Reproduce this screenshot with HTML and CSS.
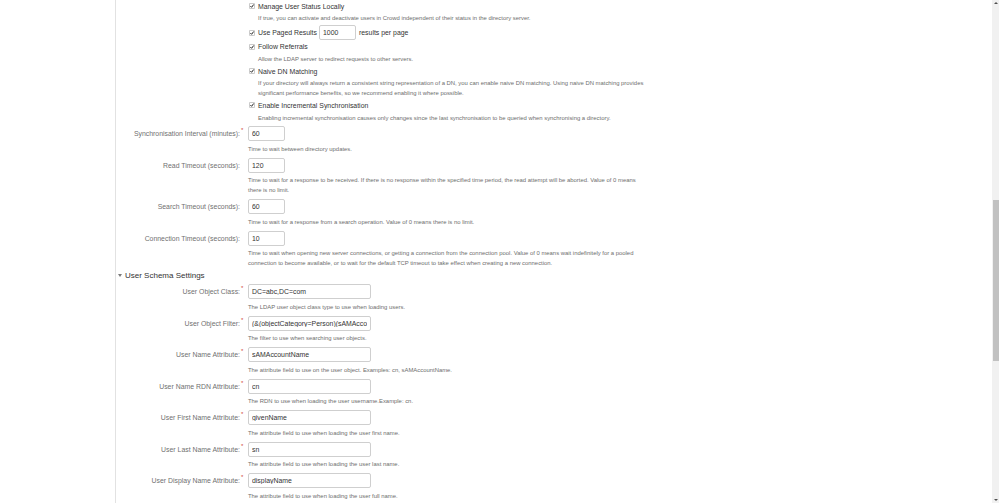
FILE: index.html
```html
<!DOCTYPE html>
<html lang="en">
<head>
<meta charset="utf-8">
<title>Directory settings</title>
<link rel="stylesheet" href="styles.css">
</head>
<body>
<div class="page">
  <div class="panel">
    <div class="checks">
      <div class="check">
        <div class="check-title"><svg class="cb" viewBox="0 0 6 6"><rect x="0.4" y="0.4" width="5.2" height="5.2" rx="0.8" fill="#fff" stroke="#9a9a9a" stroke-width="0.6"/><path d="M1.4 3.1 L2.6 4.3 L4.7 1.5" fill="none" stroke="#222" stroke-width="1"/></svg><span>Manage User Status Locally</span></div>
        <div class="desc">If true, you can activate and deactivate users in Crowd independent of their status in the directory server.</div>
      </div>
      <div class="check">
        <div class="check-title paged"><svg class="cb" viewBox="0 0 6 6"><rect x="0.4" y="0.4" width="5.2" height="5.2" rx="0.8" fill="#fff" stroke="#9a9a9a" stroke-width="0.6"/><path d="M1.4 3.1 L2.6 4.3 L4.7 1.5" fill="none" stroke="#222" stroke-width="1"/></svg><span>Use Paged Results</span><input class="field small" type="text" value="1000"><span>results per page</span></div>
      </div>
      <div class="check">
        <div class="check-title"><svg class="cb" viewBox="0 0 6 6"><rect x="0.4" y="0.4" width="5.2" height="5.2" rx="0.8" fill="#fff" stroke="#9a9a9a" stroke-width="0.6"/><path d="M1.4 3.1 L2.6 4.3 L4.7 1.5" fill="none" stroke="#222" stroke-width="1"/></svg><span>Follow Referrals</span></div>
        <div class="desc">Allow the LDAP server to redirect requests to other servers.</div>
      </div>
      <div class="check">
        <div class="check-title"><svg class="cb" viewBox="0 0 6 6"><rect x="0.4" y="0.4" width="5.2" height="5.2" rx="0.8" fill="#fff" stroke="#9a9a9a" stroke-width="0.6"/><path d="M1.4 3.1 L2.6 4.3 L4.7 1.5" fill="none" stroke="#222" stroke-width="1"/></svg><span>Naive DN Matching</span></div>
        <div class="desc">If your directory will always return a consistent string representation of a DN, you can enable naive DN matching. Using naive DN matching provides<br>significant performance benefits, so we recommend enabling it where possible.</div>
      </div>
      <div class="check">
        <div class="check-title"><svg class="cb" viewBox="0 0 6 6"><rect x="0.4" y="0.4" width="5.2" height="5.2" rx="0.8" fill="#fff" stroke="#9a9a9a" stroke-width="0.6"/><path d="M1.4 3.1 L2.6 4.3 L4.7 1.5" fill="none" stroke="#222" stroke-width="1"/></svg><span>Enable Incremental Synchronisation</span></div>
        <div class="desc">Enabling incremental synchronisation causes only changes since the last synchronisation to be queried when synchronising a directory.</div>
      </div>
    </div>

    <div class="rows">
      <div class="row">
        <label class="label">Synchronisation Interval (minutes):<span class="req">*</span></label>
        <div class="control"><input class="field small" type="text" value="60"><div class="desc">Time to wait between directory updates.</div></div>
      </div>
      <div class="row">
        <label class="label plain">Read Timeout (seconds):</label>
        <div class="control"><input class="field small" type="text" value="120"><div class="desc">Time to wait for a response to be received. If there is no response within the specified time period, the read attempt will be aborted. Value of 0 means<br>there is no limit.</div></div>
      </div>
      <div class="row">
        <label class="label plain">Search Timeout (seconds):</label>
        <div class="control"><input class="field small" type="text" value="60"><div class="desc">Time to wait for a response from a search operation. Value of 0 means there is no limit.</div></div>
      </div>
      <div class="row">
        <label class="label plain">Connection Timeout (seconds):</label>
        <div class="control"><input class="field small" type="text" value="10"><div class="desc">Time to wait when opening new server connections, or getting a connection from the connection pool. Value of 0 means wait indefinitely for a pooled<br>connection to become available, or to wait for the default TCP timeout to take effect when creating a new connection.</div></div>
      </div>
    </div>

    <div class="section-head"><svg class="tri" viewBox="0 0 4 3"><path d="M0 0H4L2 3Z" fill="#7a7a7a"/></svg><span>User Schema Settings</span></div>

    <div class="rows">
      <div class="row">
        <label class="label">User Object Class:<span class="req">*</span></label>
        <div class="control"><input class="field wide" type="text" value="DC=abc,DC=com"><div class="desc">The LDAP user object class type to use when loading users.</div></div>
      </div>
      <div class="row">
        <label class="label">User Object Filter:<span class="req">*</span></label>
        <div class="control"><input class="field wide" type="text" value="(&amp;(objectCategory=Person)(sAMAccountName=*))"><div class="desc">The filter to use when searching user objects.</div></div>
      </div>
      <div class="row">
        <label class="label">User Name Attribute:<span class="req">*</span></label>
        <div class="control"><input class="field wide" type="text" value="sAMAccountName"><div class="desc">The attribute field to use on the user object. Examples: cn, sAMAccountName.</div></div>
      </div>
      <div class="row">
        <label class="label">User Name RDN Attribute:<span class="req">*</span></label>
        <div class="control"><input class="field wide" type="text" value="cn"><div class="desc">The RDN to use when loading the user username.Example: cn.</div></div>
      </div>
      <div class="row">
        <label class="label">User First Name Attribute:<span class="req">*</span></label>
        <div class="control"><input class="field wide" type="text" value="givenName"><div class="desc">The attribute field to use when loading the user first name.</div></div>
      </div>
      <div class="row">
        <label class="label">User Last Name Attribute:<span class="req">*</span></label>
        <div class="control"><input class="field wide" type="text" value="sn"><div class="desc">The attribute field to use when loading the user last name.</div></div>
      </div>
      <div class="row">
        <label class="label">User Display Name Attribute:<span class="req">*</span></label>
        <div class="control"><input class="field wide" type="text" value="displayName"><div class="desc">The attribute field to use when loading the user full name.</div></div>
      </div>
    </div>
  </div>
</div>

<div class="scrollbar">
  <span class="sb-up"></span>
  <div class="sb-thumb"></div>
  <span class="sb-down"></span>
</div>
</body>
</html>
```

FILE: styles.css
```css
html, body {
  margin: 0;
  padding: 0;
  background: #fff;
  height: 503px;
  overflow: hidden;
}

body {
  font-family: "Liberation Sans", Arial, sans-serif;
  color: #333;
}

.page {
  padding-left: 115px;
  padding-right: 8px;
}

.panel {
  border-left: 1px solid #e2e2e2;
  min-height: 520px;
}

/* checkbox block */
.checks {
  padding-left: 133px;
}

.check-title {
  display: flex;
  align-items: center;
  gap: 3px;
  height: 12px;
  font-size: 6.9px;
  color: #333;
  white-space: nowrap;
}

.check-title.paged {
  height: 16px;
  gap: 2px;
  margin-top: 1.5px;
}

.check-title.paged .cb {
  margin-right: 1px;
}

.check-title.paged .field {
  margin: 0 1px 0 0;
}

.cb {
  width: 6px;
  height: 6px;
  flex: none;
}

.check .desc {
  padding-left: 9px;
  margin-top: 1.25px;
  margin-bottom: 1px;
}

.desc {
  font-size: 5.9px;
  line-height: 10px;
  color: #6e6e6e;
  white-space: nowrap;
}

/* label + control rows */
.rows {
  padding-top: 2.5px;
}

.row {
  display: grid;
  grid-template-columns: 129px 1fr;
  column-gap: 3px;
}

.label {
  text-align: right;
  font-size: 6.9px;
  line-height: 15px;
  height: 15px;
  color: #707070;
  white-space: nowrap;
}

.label.plain {
  padding-right: 5px;
}

.req {
  display: inline-block;
  width: 5px;
  text-align: left;
  color: #d04437;
  font-size: 6px;
  line-height: 6px;
  vertical-align: 4px;
  padding-left: 1px;
  box-sizing: border-box;
}

.control .desc {
  margin-top: 2.5px;
  margin-bottom: 4px;
}

.field {
  display: block;
  box-sizing: border-box;
  height: 15px;
  margin: 0;
  padding: 0 3px;
  border: 1px solid #cfcfcf;
  border-radius: 2px;
  background: #fff;
  font-family: "Liberation Sans", Arial, sans-serif;
  font-size: 6.9px;
  color: #333;
  outline: none;
}

.field.small {
  width: 37px;
}

.field.wide {
  width: 123px;
}

/* section heading */
.section-head {
  display: flex;
  align-items: center;
  gap: 3px;
  margin: -2px 0 0 2px;
  height: 10px;
  font-size: 8px;
  color: #333;
}

.section-head + .rows {
  padding-top: 4px;
}

.tri {
  width: 4px;
  height: 3px;
  flex: none;
}

/* fake window scrollbar */
.scrollbar {
  position: fixed;
  top: 0;
  right: 0;
  width: 7px;
  height: 503px;
  background: #f1f1f1;
}

.sb-thumb {
  position: absolute;
  top: 200px;
  left: 1px;
  right: 0;
  height: 161px;
  background: #c1c1c1;
}

.sb-up,
.sb-down {
  position: absolute;
  left: 2px;
  width: 0;
  height: 0;
  border-left: 2px solid transparent;
  border-right: 2px solid transparent;
}

.sb-up {
  top: 2px;
  border-bottom: 2px solid #505050;
}

.sb-down {
  bottom: 2px;
  border-top: 2px solid #505050;
}
```
